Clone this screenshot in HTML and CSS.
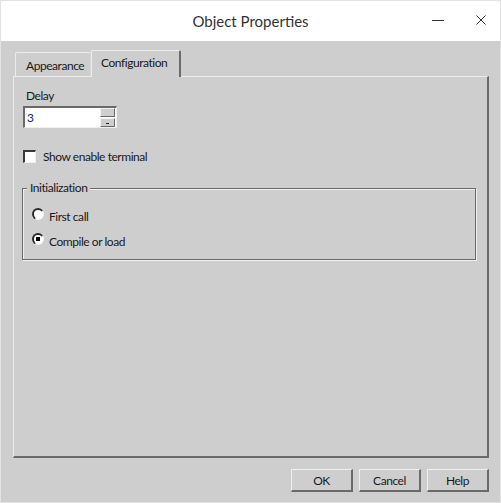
FILE: index.html
```html
<!DOCTYPE html>
<html>
<head>
<meta charset="utf-8">
<link rel="stylesheet" href="styles.css">
</head>
<body>
<div class="window">
  <div class="titlebar">
    <div></div>
    <div class="title">Object Properties</div>
    <div class="controls">
      <span class="ctl min"><svg width="12" height="12" viewBox="0 0 12 12"><path d="M0 6.5H12" stroke="#333" stroke-width="1"/></svg></span>
      <span class="ctl close"><svg width="12" height="12" viewBox="0 0 12 12"><path d="M1.5 1.5L10.5 10.5M10.5 1.5L1.5 10.5" stroke="#333" stroke-width="1"/></svg></span>
    </div>
  </div>
  <div class="content">
    <div class="tabs">
      <div class="tab">Appearance</div>
      <div class="tab active">Configuration</div>
    </div>
    <div class="panel">
      <div class="label">Delay</div>
      <div class="spin">
        <span class="spin-value">3</span>
        <div class="spin-btns">
          <span class="sbtn"></span>
          <span class="sbtn"><i class="mark"></i></span>
        </div>
      </div>
      <label class="check">
        <span class="checkbox"></span>
        <span>Show enable terminal</span>
      </label>
      <div class="group">
        <div class="legend">Initialization</div>
        <div class="radio-row"><span class="radio"></span><span>First call</span></div>
        <div class="radio-row"><span class="radio checked"></span><span>Compile or load</span></div>
      </div>
    </div>
    <div class="buttons">
      <div class="btn">OK</div>
      <div class="btn">Cancel</div>
      <div class="btn">Help</div>
    </div>
  </div>
</div>
</body>
</html>
```
FILE: styles.css
```css
* { box-sizing: border-box; }
html, body { margin: 0; padding: 0; }
body {
  font-family: Lato, "Noto Sans", sans-serif;
  font-size: 12px;
  letter-spacing: -0.45px;
  color: #1a1a1a;
  background: #fff;
}
.window {
  width: 501px;
  height: 503px;
  border: 1px solid #e2e2e2;
  background: #cecece;
  display: flex;
  flex-direction: column;
}
.titlebar {
  height: 40px;
  background: #fff;
  display: grid;
  grid-template-columns: 1fr auto 1fr;
  align-items: center;
}
.title {
  font-size: 15px;
  letter-spacing: 0;
  color: #333;
}
.controls {
  display: flex;
  justify-content: flex-end;
  align-items: center;
  gap: 31px;
  padding-right: 13px;
  padding-bottom: 2px;
}
.ctl { display: block; width: 12px; height: 12px; }
.ctl svg { display: block; }
.content {
  flex: 1;
  padding: 9px 11px 10px 12px;
  display: flex;
  flex-direction: column;
}
.tabs {
  display: flex;
  align-items: flex-end;
  padding-left: 2px;
  height: 27px;
  margin-bottom: -1px;
  position: relative;
  z-index: 1;
}
.tab {
  height: 24px;
  width: 76px;
  border-top: 1px solid #ececec;
  border-left: 1px solid #ececec;
  border-right: 1px solid #d8d8d8;
  padding: 5px 0 0 10px;
  border-radius: 2px 2px 0 0;
  margin-bottom: 1px;
}
.tab.active {
  height: 27px;
  width: 90px;
  background: #cecece;
  border-right: 2px solid #6a6a6a;
  padding: 4px 0 0 9px;
  margin-bottom: 0;
}
.panel {
  height: 382px;
  border-top: 1px solid #ececec;
  border-left: 1px solid #ececec;
  border-right: 2px solid #6a6a6a;
  border-bottom: 2px solid #6a6a6a;
  padding: 11px 0 0 9px;
}
.label { line-height: 16px; padding-left: 3px; }
.spin {
  margin-top: 2px;
  width: 94px;
  height: 22px;
  background: #fff;
  border-top: 2px solid #6a6a6a;
  border-left: 2px solid #6a6a6a;
  border-right: 1px solid #f0f0f0;
  border-bottom: 1px solid #f0f0f0;
  display: flex;
  align-items: center;
  justify-content: space-between;
  padding: 0 1px 0 2px;
}
.spin-value { color: #1a1a6a; line-height: 18px; }
.spin-btns { display: flex; flex-direction: column; gap: 1px; }
.sbtn {
  width: 15px;
  height: 9px;
  background: #cecece;
  border-top: 1px solid #f2f2f2;
  border-left: 1px solid #f2f2f2;
  border-right: 1px solid #6a6a6a;
  border-bottom: 1px solid #6a6a6a;
  display: flex;
  align-items: center;
  justify-content: center;
}
.mark { display: block; width: 3px; height: 1px; background: #222; margin-top: 1px; }
.check {
  display: flex;
  align-items: center;
  gap: 7px;
  margin-top: 21px;
}
.checkbox {
  width: 13px;
  height: 13px;
  background: #fff;
  border-top: 2px solid #3a3a3a;
  border-left: 2px solid #3a3a3a;
  border-right: 1px solid #f0f0f0;
  border-bottom: 1px solid #f0f0f0;
}
.group {
  position: relative;
  margin-top: 24px;
  width: 454px;
  height: 72px;
  border: 1px solid #6a6a6a;
  box-shadow: inset 1px 1px 0 #f0f0f0, 1px 1px 0 #f0f0f0;
  margin-left: -1px;
  padding: 14px 0 0 9px;
}
.legend {
  position: absolute;
  left: 4px;
  top: -9px;
  background: #cecece;
  padding: 0 3px;
  line-height: 16px;
}
.radio-row {
  display: flex;
  align-items: center;
  gap: 5px;
  height: 25px;
  line-height: 16px;
}
.radio-row > span:last-child { padding-top: 2px; }
.radio {
  width: 12px;
  height: 12px;
  border-radius: 50%;
  background: #fff;
  border-top: 2px solid #2a2a2a;
  border-left: 2px solid #2a2a2a;
  border-right: 1px solid #f4f4f4;
  border-bottom: 1px solid #f4f4f4;
  position: relative;
  margin-top: -4px;
}
.radio.checked::after {
  content: "";
  position: absolute;
  left: 2px;
  top: 2px;
  width: 4px;
  height: 4px;
  background: #000;
}
.buttons {
  display: flex;
  justify-content: flex-end;
  gap: 6px;
  margin-top: 11px;
}
.btn {
  width: 62px;
  height: 23px;
  border-top: 1px solid #f0f0f0;
  border-left: 1px solid #f0f0f0;
  border-right: 2px solid #6a6a6a;
  border-bottom: 2px solid #6a6a6a;
  display: flex;
  align-items: center;
  justify-content: center;
}
```
